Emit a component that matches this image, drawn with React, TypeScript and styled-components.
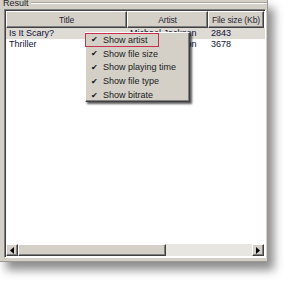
import React from "react";
import styled, { createGlobalStyle } from "styled-components";

const GlobalStyle = createGlobalStyle`
  html, body {
    margin: 0;
    padding: 0;
    background: #ffffff;
  }
  body {
    font-family: "Liberation Sans", Arial, sans-serif;
    font-size: 9px;
  }
`;

const Page = styled.div`
  width: 292px;
  height: 287px;
  overflow: hidden;
  background: #ffffff;
`;

const Window = styled.div`
  position: relative;
  width: 267px;
  height: 261px;
  background: #d4d0c8;
  border-right: 1px solid #9a978f;
  border-bottom: 1px solid #9a978f;
  box-shadow: 6px 8px 9px rgba(0, 0, 0, 0.45);
  display: flex;
  flex-direction: column;
`;

const GroupHead = styled.div`
  display: flex;
  align-items: center;
  height: 11px;
  margin-top: -2px;
`;

const GroupLabel = styled.span`
  padding: 0 2px 0 3px;
  color: #222;
  font-size: 9px;
  line-height: 11px;
`;

const GroupLine = styled.div`
  flex: 1;
  height: 0;
  border-top: 1px solid #a8a59d;
  border-bottom: 1px solid #ffffff;
  margin-top: -1px;
`;

const ListView = styled.div`
  width: 262px;
  height: 249px;
  margin-left: 4px;
  background: #ffffff;
  border-top: 1px solid #808080;
  border-left: 1px solid #808080;
  border-right: 1px solid #ffffff;
  border-bottom: 1px solid #ffffff;
  box-shadow: inset 1px 1px 0 #404040;
  display: flex;
  flex-direction: column;
  box-sizing: border-box;
`;

const Header = styled.div`
  display: grid;
  grid-template-columns: 121px 81px 56px;
  height: 17px;
  margin: 1px 0 0 1px;
`;

const HeaderCell = styled.div`
  background: #d4d0c8;
  border-top: 1px solid #ffffff;
  border-left: 1px solid #ffffff;
  border-right: 1px solid #404040;
  border-bottom: 1px solid #404040;
  box-shadow: inset -1px -1px 0 #808080;
  display: flex;
  align-items: center;
  justify-content: center;
  color: #262630;
  font-size: 8.6px;
  letter-spacing: -0.15px;
  white-space: nowrap;
  overflow: hidden;
  box-sizing: border-box;
`;

const Rows = styled.div`
  flex: 1;
  margin-left: 1px;
`;

const Row = styled.div<{ $selected?: boolean }>`
  display: grid;
  grid-template-columns: 121px 81px 56px;
  height: 10.5px;
  line-height: 10px;
  background: ${(p) => (p.$selected ? "#dedbd4" : "#ffffff")};
  color: #10103a;
`;

const Cell = styled.div`
  padding-left: 3px;
  white-space: nowrap;
  overflow: hidden;
`;

const ScrollBar = styled.div`
  display: flex;
  height: 12px;
  margin: 0 1px 1px 1px;
  background: #e8e6e1;
`;

const ScrollButton = styled.div`
  width: 12px;
  height: 12px;
  box-sizing: border-box;
  background: #d4d0c8;
  border-top: 1px solid #ffffff;
  border-left: 1px solid #ffffff;
  border-right: 1px solid #404040;
  border-bottom: 1px solid #404040;
  box-shadow: inset -1px -1px 0 #808080;
  display: flex;
  align-items: center;
  justify-content: center;
`;

const Thumb = styled(ScrollButton)`
  width: 148px;
`;

const Track = styled.div`
  flex: 1;
`;

const Menu = styled.div`
  position: absolute;
  left: 85px;
  top: 32px;
  width: 105px;
  height: 70px;
  box-sizing: border-box;
  background: #d4d0c8;
  border-top: 1px solid #ffffff;
  border-left: 1px solid #ffffff;
  border-right: 1px solid #404040;
  border-bottom: 1px solid #404040;
  box-shadow: inset -1px -1px 0 #808080, 2px 2px 2px rgba(0, 0, 0, 0.65);
`;

const MenuItem = styled.div<{ $focused?: boolean }>`
  display: flex;
  align-items: center;
  height: 13.8px;
  width: ${(p) => (p.$focused ? "74px" : "auto")};
  box-sizing: border-box;
  border: 1px solid ${(p) => (p.$focused ? "#c8324c" : "transparent")};
  margin-left: -1px;
  color: #1a1a1a;
  font-size: 9px;
  white-space: nowrap;
`;

const Check = styled.span`
  width: 11px;
  margin-left: 5px;
  margin-right: 1px;
  font-size: 8px;
  color: #111;
`;

const Arrow = ({ dir }: { dir: "left" | "right" }) => (
  <svg width="4" height="7" viewBox="0 0 4 7">
    {dir === "left" ? (
      <polygon points="4,0 4,7 0,3.5" fill="#000" />
    ) : (
      <polygon points="0,0 0,7 4,3.5" fill="#000" />
    )}
  </svg>
);

const tracks = [
  { title: "Is It Scary?", artist: "Michael Jackson", size: "2843" },
  { title: "Thriller", artist: "Michael Jackson", size: "3678" },
];

const menuItems = [
  "Show artist",
  "Show file size",
  "Show playing time",
  "Show file type",
  "Show bitrate",
];

export default function App() {
  return (
    <Page>
      <GlobalStyle />
      <Window>
        <GroupHead>
          <GroupLabel>Result</GroupLabel>
          <GroupLine />
        </GroupHead>
        <ListView>
          <Header>
            <HeaderCell>Title</HeaderCell>
            <HeaderCell>Artist</HeaderCell>
            <HeaderCell>File size (Kb)</HeaderCell>
          </Header>
          <Rows>
            {tracks.map((t, i) => (
              <Row key={t.title} $selected={i === 0}>
                <Cell>{t.title}</Cell>
                <Cell>{t.artist}</Cell>
                <Cell>{t.size}</Cell>
              </Row>
            ))}
          </Rows>
          <ScrollBar>
            <ScrollButton>
              <Arrow dir="left" />
            </ScrollButton>
            <Thumb />
            <Track />
            <ScrollButton>
              <Arrow dir="right" />
            </ScrollButton>
          </ScrollBar>
        </ListView>
        <Menu>
          {menuItems.map((label, i) => (
            <MenuItem key={label} $focused={i === 0}>
              <Check>✔</Check>
              {label}
            </MenuItem>
          ))}
        </Menu>
      </Window>
    </Page>
  );
}
